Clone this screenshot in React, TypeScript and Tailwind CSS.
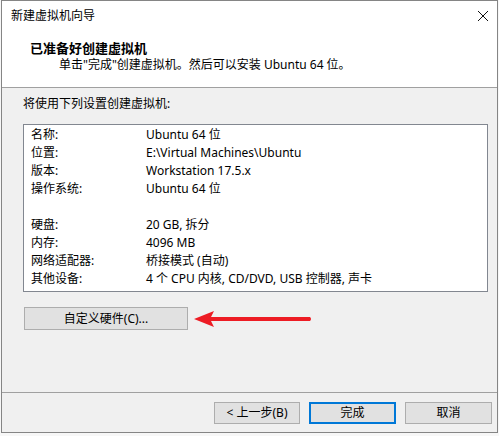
import React from 'react';

const rows: [string, string][] = [
  ['名称:', 'Ubuntu 64 位'],
  ['位置:', 'E:\\Virtual Machines\\Ubuntu'],
  ['版本:', 'Workstation 17.5.x'],
  ['操作系统:', 'Ubuntu 64 位'],
  ['', ''],
  ['硬盘:', '20 GB, 拆分'],
  ['内存:', '4096 MB'],
  ['网络适配器:', '桥接模式 (自动)'],
  ['其他设备:', '4 个 CPU 内核, CD/DVD, USB 控制器, 声卡'],
];

const font = { fontFamily: '"Noto Sans", "Noto Sans CJK SC", sans-serif' };

const App: React.FC = () => {
  return (
    <div className="w-[499px] h-[436px] bg-[#f7f7f7] text-[12px] text-black" style={font}>
      <div className="ml-[1px] w-[497px] h-[433px] border border-[#858585] flex flex-col bg-[#f0f0f0]">
        {/* Title bar */}
        <div className="h-[30px] bg-white flex items-center justify-between pl-[9px] pr-[7px]">
          <span className="leading-[18px]">新建虚拟机向导</span>
          <svg width="12" height="12" viewBox="0 0 12 12" className="mr-[1px]">
            <path d="M1 1 L11 11 M11 1 L1 11" stroke="#111" strokeWidth="1" />
          </svg>
        </div>

        {/* Header */}
        <div className="h-[57px] bg-white border-b border-[#a0a0a0] pl-[28px] pt-[8px]">
          <div className="font-bold leading-[18px] text-[13px]">已准备好创建虚拟机</div>
          <div className="pl-[29px] leading-[16px]">单击"完成"创建虚拟机。然后可以安装 Ubuntu 64 位。</div>
        </div>

        {/* Body */}
        <div className="flex-1 pl-[21px] pt-[7px] border-b border-[#a0a0a0]">
          <div className="leading-[18px]">将使用下列设置创建虚拟机:</div>
          <div className="mt-[11px] w-[465px] h-[168px] bg-white border border-[#828790] pl-[7px] pt-[1px]">
            {rows.map(([k, v], i) => (
              <div key={i} className="flex h-[18px] leading-[18px] whitespace-nowrap">
                <span className="w-[115px]">{k}</span>
                <span>{v}</span>
              </div>
            ))}
          </div>
          <div className="mt-[15px] flex items-center">
            <button className="ml-[1px] w-[164px] h-[23px] bg-[#e1e1e1] border border-[#adadad] leading-[18px]">
              自定义硬件(C)...
            </button>
            <svg width="122" height="20" viewBox="0 0 122 20" className="ml-[4px]">
              <path d="M2 10 L22 2 L19 8 L118 8 Q120 10 118 12 L19 12 L22 18 Z" fill="#ed1c24" />
            </svg>
          </div>
        </div>

        {/* Footer */}
        <div className="h-[39px] flex justify-end items-start pt-[9px] pr-[5px] gap-[9px]">
          <button className="w-[86px] h-[22px] bg-[#e1e1e1] border border-[#adadad] leading-[18px]">&lt; 上一步(B)</button>
          <button className="w-[87px] h-[22px] bg-[#e1e1e1] border-2 border-[#0078d7] leading-[18px]">完成</button>
          <button className="w-[87px] h-[22px] bg-[#e1e1e1] border border-[#adadad] leading-[18px]">取消</button>
        </div>
      </div>
    </div>
  );
};

export default App;
